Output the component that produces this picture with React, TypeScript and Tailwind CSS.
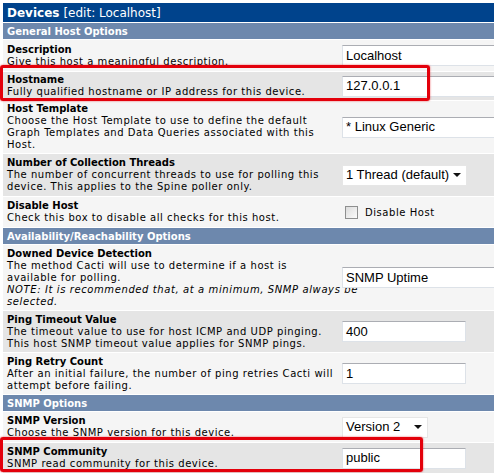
import React from "react";

type RowProps = {
  gray?: boolean;
  height: string;
  title: string;
  children: React.ReactNode;
  control: React.ReactNode;
};

// one form row: label + help text on the left, the field on the right
const Row: React.FC<RowProps> = ({ gray, height, title, children, control }) => (
  <div className={`flex items-center ${height} ${gray ? "bg-[#e5e5e5]" : "bg-[#f5f5f5]"}`}>
    <div className="w-[335px] shrink-0 pl-[4px] text-[10px] leading-[12px] text-black whitespace-nowrap">
      <div className="font-bold">{title}</div>
      <div className="tracking-[0.55px]">{children}</div>
    </div>
    <div className="flex-1 pl-[4px]">{control}</div>
  </div>
);

const Section: React.FC<{ label: string; height: string }> = ({ label, height }) => (
  <div className={`flex items-center ${height} bg-[#6d88ad] pl-[4px] text-[10px] font-bold text-white`}>
    {label}
  </div>
);

const TextInput: React.FC<{ value: string; width: string }> = ({ value, width }) => (
  <div
    className={`${width} h-[21px] flex items-center bg-white border border-[#dde2e8] border-t-[#abadb3] pl-[3px] font-['Liberation_Sans',Arial,sans-serif] text-[13px] text-black`}
  >
    {value}
  </div>
);

const SelectBox: React.FC<{ value: string; width: string }> = ({ value, width }) => (
  <div
    className={`${width} h-[21px] flex items-center justify-between bg-white border border-[#e6e6e6] pl-[3px] pr-[5px] font-['Liberation_Sans',Arial,sans-serif] text-[13px] text-black`}
  >
    <span>{value}</span>
    <svg width="8" height="4" viewBox="0 0 8 4">
      <path d="M0 0 L8 0 L4 4 Z" fill="#111" />
    </svg>
  </div>
);

export default function App() {
  return (
    <div className="relative w-[494px] h-[473px] overflow-hidden bg-white font-['DejaVu_Sans',Verdana,sans-serif]">
      <div className="pt-[3px] pl-[3px] flex flex-col gap-px w-[500px]">
        <div className="flex items-center h-[19px] bg-[#00438c] pl-[4px] text-white text-[12px]">
          <span className="font-bold">Devices</span>
          <span className="ml-[4px]">[edit: Localhost]</span>
        </div>

        <Section label="General Host Options" height="h-[16px]" />

        <Row height="h-[31px]" title="Description" control={<TextInput value="Localhost" width="w-[170px]" />}>
          <div>Give this host a meaningful description.</div>
        </Row>

        <Row gray height="h-[28px]" title="Hostname" control={<TextInput value="127.0.0.1" width="w-[170px]" />}>
          <div>Fully qualified hostname or IP address for this device.</div>
        </Row>

        <Row height="h-[52px]" title="Host Template" control={<TextInput value="* Linux Generic" width="w-[170px]" />}>
          <div>Choose the Host Template to use to define the default</div>
          <div>Graph Templates and Data Queries associated with this</div>
          <div>Host.</div>
        </Row>

        <Row gray height="h-[42px]" title="Number of Collection Threads" control={<SelectBox value="1 Thread (default)" width="w-[125px]" />}>
          <div>The number of concurrent threads to use for polling this</div>
          <div>device. This applies to the Spine poller only.</div>
        </Row>

        <Row
          height="h-[30px]"
          title="Disable Host"
          control={
            <div className="flex items-center pl-[3px]">
              <div className="w-[13px] h-[13px] border border-[#8e8f8f] bg-gradient-to-br from-[#dcdcdc] to-[#fbfbfb]" />
              <span className="ml-[7px] text-[10px] tracking-[0.55px] text-black">Disable Host</span>
            </div>
          }
        >
          <div>Check this box to disable all checks for this host.</div>
        </Row>

        <Section label="Availability/Reachability Options" height="h-[16px]" />

        <Row height="h-[65px]" title="Downed Device Detection" control={<TextInput value="SNMP Uptime" width="w-[170px]" />}>
          <div>The method Cacti will use to determine if a host is</div>
          <div>available for polling.</div>
          <div className="italic tracking-[0.6px]">NOTE: It is recommended that, at a minimum, SNMP always be</div>
          <div className="italic tracking-[0.6px]">selected.</div>
        </Row>

        <Row gray height="h-[41px]" title="Ping Timeout Value" control={<TextInput value="400" width="w-[124px]" />}>
          <div>The timeout value to use for host ICMP and UDP pinging.</div>
          <div>This host SNMP timeout value applies for SNMP pings.</div>
        </Row>

        <Row height="h-[41px]" title="Ping Retry Count" control={<TextInput value="1" width="w-[124px]" />}>
          <div>After an initial failure, the number of ping retries Cacti will</div>
          <div>attempt before failing.</div>
        </Row>

        <Section label="SNMP Options" height="h-[16px]" />

        <Row height="h-[30px]" title="SNMP Version" control={<SelectBox value="Version 2" width="w-[86px]" />}>
          <div>Choose the SNMP version for this device.</div>
        </Row>

        <Row gray height="h-[30px]" title="SNMP Community" control={<TextInput value="public" width="w-[124px]" />}>
          <div>SNMP read community for this device.</div>
        </Row>
      </div>

      {/* red highlight boxes drawn over the screenshot */}
      <div className="absolute left-0 top-[65px] w-[430px] h-[36px] border-[3px] border-[#e3000b] rounded-[3px] shadow-[0_0_2px_rgba(227,0,11,0.7)]" />
      <div className="absolute left-0 top-[437px] w-[423px] h-[35px] border-[3px] border-[#e3000b] rounded-[3px] shadow-[0_0_2px_rgba(227,0,11,0.7)]" />
    </div>
  );
}
